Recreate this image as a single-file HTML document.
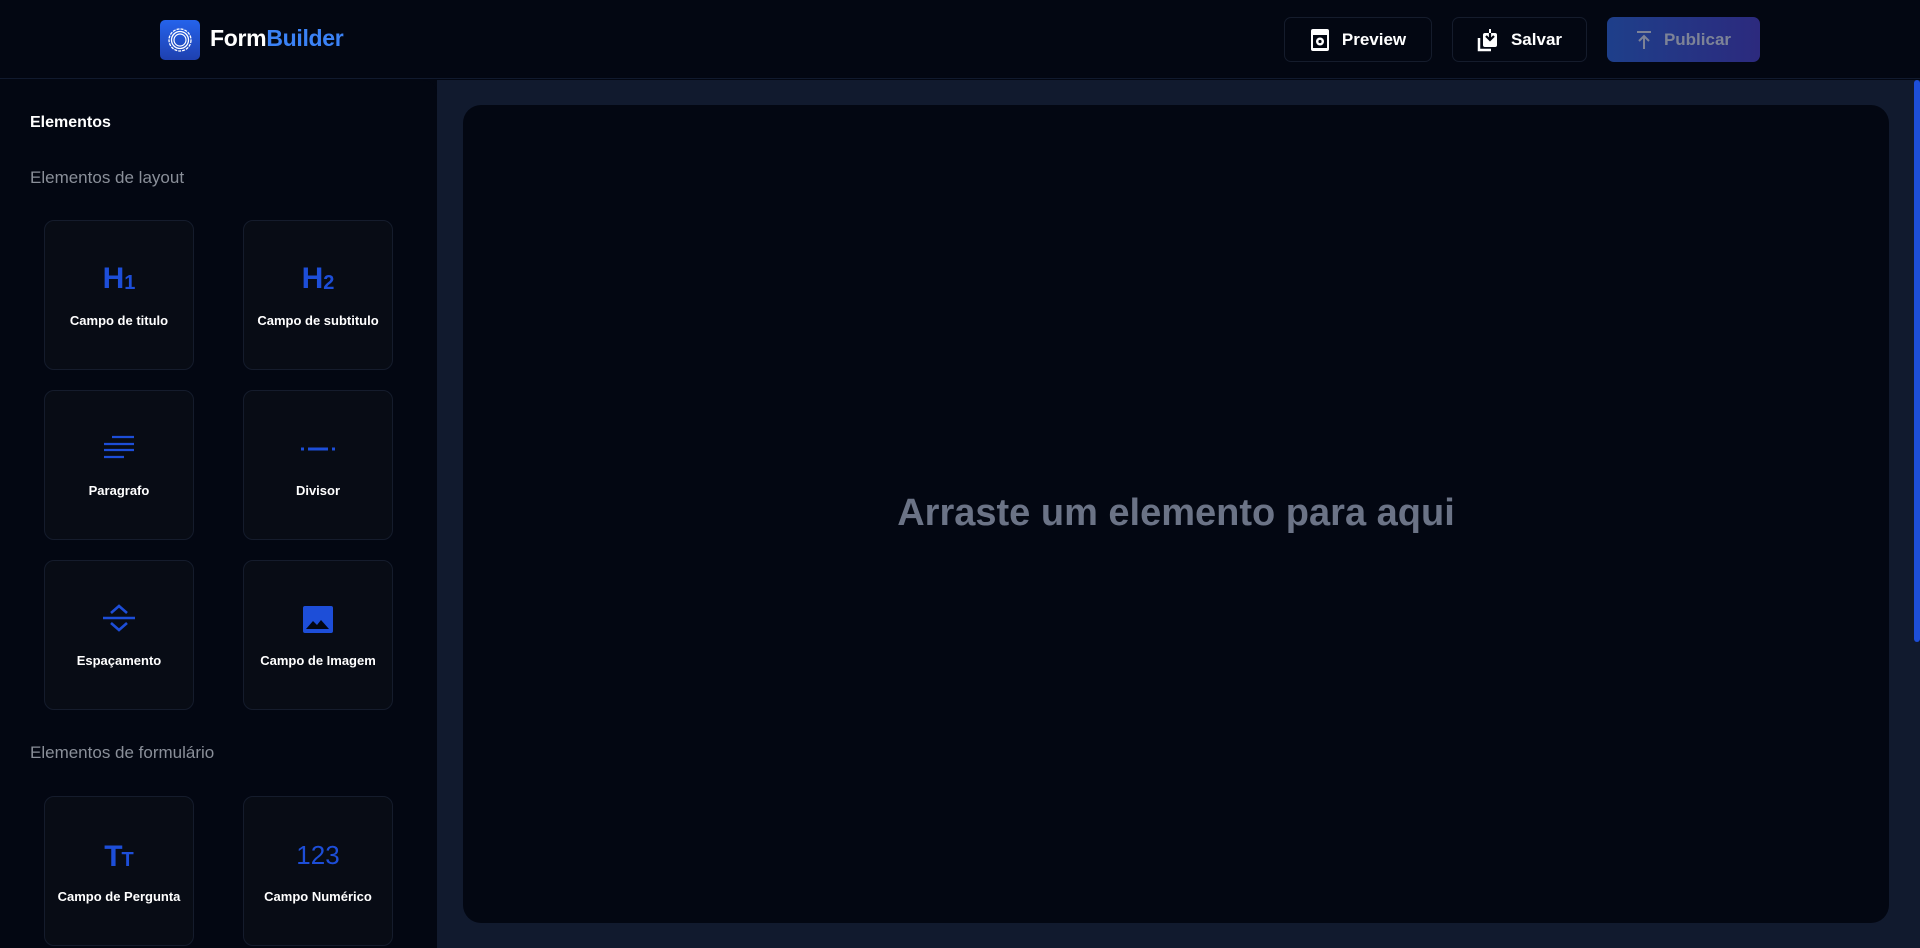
<!DOCTYPE html>
<html><head><meta charset="utf-8"><style>
*{box-sizing:border-box;margin:0;padding:0}
body{width:1920px;height:948px;overflow:hidden;background:#030712;font-family:"Liberation Sans",sans-serif;position:relative}
.hdr{position:absolute;left:0;top:0;width:1920px;height:79px;background:#030712;border-bottom:1px solid #111a2e}
.logo{position:absolute;left:160px;top:20px;width:40px;height:40px;border-radius:5px;background:linear-gradient(180deg,#2563eb,#1e40af)}
.brand{position:absolute;left:210px;top:25px;font-size:23px;font-weight:bold;color:#fff;letter-spacing:-0.3px}
.brand span{color:#3b82f6}
.btn{position:absolute;top:17px;height:45px;border:1px solid #151c2c;border-radius:7px;color:#fff;font-size:17px;font-weight:bold;display:flex;align-items:center;justify-content:center;gap:12px}
.main{position:absolute;left:437px;top:80px;width:1483px;height:868px;background:#111a2e}
.side{position:absolute;left:0;top:80px;width:437px;height:868px;background:#030712;border-top-right-radius:14px}
.canvas{position:absolute;left:463px;top:105px;width:1426px;height:818px;background:#030712;border-radius:18px}
.drop{position:absolute;left:0;right:0;top:387px;text-align:center;font-size:38px;font-weight:bold;color:#6b7386}
.sb{position:absolute;left:1914px;top:80px;width:6px;height:562px;background:#1d4ed8;border-radius:3px}
h3{position:absolute;left:30px;font-size:16px;font-weight:bold;color:#fff}
.sec{position:absolute;left:30px;font-size:17px;color:#8a8f99}
.card{position:absolute;width:150px;height:150px;background:#080c15;border:1px solid #151c2c;border-radius:10px}
.card .ic{position:absolute;left:0;right:0;top:38px;height:40px;display:flex;align-items:center;justify-content:center;color:#1d4ed8}
.card .lb{position:absolute;left:0;right:0;top:92px;text-align:center;font-size:13px;font-weight:bold;color:#fff}
</style></head><body>
<div class="hdr">
 <div class="logo"><svg width="40" height="40" viewBox="0 0 40 40"><circle cx="20" cy="20" r="11" fill="none" stroke="#fff" stroke-width="1.3" stroke-dasharray="3 1"/><circle cx="20" cy="20" r="8.5" fill="none" stroke="#fff" stroke-width="1.3"/><circle cx="20" cy="20" r="6" fill="none" stroke="#fff" stroke-width="1.2"/></svg></div>
 <div class="brand">Form<span>Builder</span></div>
 <div class="btn" style="left:1284px;width:148px"><svg width="20" height="24" viewBox="0 0 20 24"><rect x="1" y="1" width="18" height="22" rx="2" fill="#fff"/><rect x="3" y="7" width="14" height="13" fill="#030712"/><circle cx="10" cy="13.5" r="4" fill="#fff"/><circle cx="10" cy="13.5" r="1.6" fill="#030712"/></svg>Preview</div>
 <div class="btn" style="left:1452px;width:135px"><svg width="22" height="24" viewBox="0 0 22 24"><path d="M2 10v12h12" fill="none" stroke="#fff" stroke-width="2.5"/><rect x="6" y="5" width="14" height="14" rx="2" fill="#fff"/><path d="M13 1v11M9 8l4 4 4-4" fill="none" stroke="#030712" stroke-width="2.2"/><path d="M13 1v4" stroke="#fff" stroke-width="2"/></svg>Salvar</div>
 <div class="btn" style="left:1607px;width:153px;border:none;background:linear-gradient(90deg,#1e3f8a,#2c2a7e);color:#7d8397"><svg width="16" height="20" viewBox="0 0 16 20"><path d="M1 2h14M8 6v13M3 11l5-5 5 5" fill="none" stroke="#7d8397" stroke-width="2"/></svg>Publicar</div>
</div>
<div class="main"></div>
<div class="canvas"><div class="drop">Arraste um elemento para aqui</div></div>
<div class="sb"></div>
<div class="side">
 <h3 style="top:34px">Elementos</h3>
 <div class="sec" style="top:88px">Elementos de layout</div>
 <div class="card" style="left:44px;top:140px"><div class="ic" style="font-size:30px;font-weight:bold">H<span style="font-size:20px;font-weight:bold;margin-top:8px">1</span></div><div class="lb">Campo de titulo</div></div>
 <div class="card" style="left:243px;top:140px"><div class="ic" style="font-size:30px;font-weight:bold">H<span style="font-size:20px;font-weight:bold;margin-top:8px">2</span></div><div class="lb">Campo de subtitulo</div></div>
 <div class="card" style="left:44px;top:310px"><div class="ic"><svg width="34" height="28" viewBox="0 0 34 28"><path d="M10 2h22M2 9h30M2 15h30M2 22h20" stroke="#1d4ed8" stroke-width="2.2"/></svg></div><div class="lb">Paragrafo</div></div>
 <div class="card" style="left:243px;top:310px"><div class="ic"><svg width="36" height="10" viewBox="0 0 36 10"><path d="M1 5h3M8 5h20M32 5h3" stroke="#1d4ed8" stroke-width="3"/></svg></div><div class="lb">Divisor</div></div>
 <div class="card" style="left:44px;top:480px"><div class="ic"><svg width="36" height="30" viewBox="0 0 36 30"><path d="M10 9l8-7 8 7M2 14h32M10 19l8 7 8-7" fill="none" stroke="#1d4ed8" stroke-width="2.6"/></svg></div><div class="lb">Espaçamento</div></div>
 <div class="card" style="left:243px;top:480px"><div class="ic"><svg width="32" height="28" viewBox="0 0 32 28"><rect x="1" y="1" width="30" height="27" rx="2" fill="#1d4ed8"/><path d="M4 24l7-8 4 4 4-5 8 9z" fill="#030712"/></svg></div><div class="lb">Campo de Imagem</div></div>
 <div class="sec" style="top:663px">Elementos de formulário</div>
 <div class="card" style="left:44px;top:716px"><div class="ic" style="font-size:30px;font-weight:bold;top:40px">T<span style="font-size:20px;margin-top:6px;margin-left:-1px">T</span></div><div class="lb">Campo de Pergunta</div></div>
 <div class="card" style="left:243px;top:716px"><div class="ic" style="font-size:26px">123</div><div class="lb">Campo Numérico</div></div>
</div>
</body></html>
